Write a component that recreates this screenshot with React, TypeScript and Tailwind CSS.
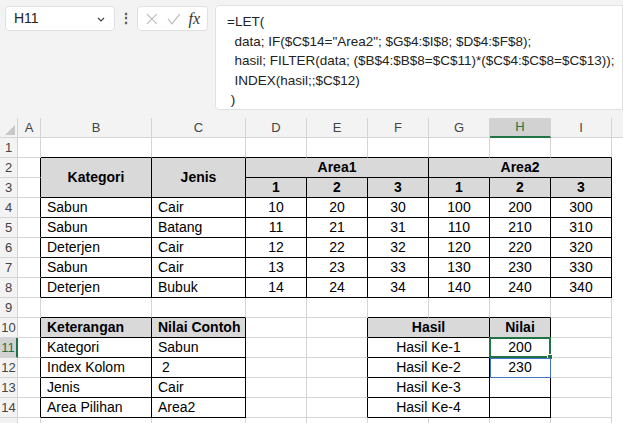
import React from 'react';

const COLS = [18, 23, 111, 94, 61, 61, 61, 61, 61, 61, 11];
const LETTERS = ['A', 'B', 'C', 'D', 'E', 'F', 'G', 'H', 'I'];
const GRID = '#d4d4d4';

type Cell = { r: number; c: number; rs?: number; cs?: number; t?: string; bold?: boolean; gray?: boolean; align?: 'l' | 'c' };

// c is 1-based: 1 = A ... 9 = I
const cells: Cell[] = [
  { r: 2, c: 2, rs: 2, t: 'Kategori', bold: true, gray: true, align: 'c' },
  { r: 2, c: 3, rs: 2, t: 'Jenis', bold: true, gray: true, align: 'c' },
  { r: 2, c: 4, cs: 3, t: 'Area1', bold: true, gray: true, align: 'c' },
  { r: 2, c: 7, cs: 3, t: 'Area2', bold: true, gray: true, align: 'c' },
  ...[4, 5, 6, 7, 8, 9].map((c, i) => ({ r: 3, c, t: String((i % 3) + 1), bold: true, gray: true, align: 'c' as const })),
];
const data = [
  ['Sabun', 'Cair', 10, 20, 30, 100, 200, 300],
  ['Sabun', 'Batang', 11, 21, 31, 110, 210, 310],
  ['Deterjen', 'Cair', 12, 22, 32, 120, 220, 320],
  ['Sabun', 'Cair', 13, 23, 33, 130, 230, 330],
  ['Deterjen', 'Bubuk', 14, 24, 34, 140, 240, 340],
];
data.forEach((row, i) => row.forEach((v, j) => cells.push({ r: 4 + i, c: 2 + j, t: String(v), align: j < 2 ? 'l' : 'c' })));
cells.push({ r: 10, c: 2, t: 'Keterangan', bold: true, gray: true }, { r: 10, c: 3, t: 'Nilai Contoh', bold: true, gray: true });
[['Kategori', 'Sabun'], ['Index Kolom', ' 2'], ['Jenis', 'Cair'], ['Area Pilihan', 'Area2']].forEach((p, i) => {
  cells.push({ r: 11 + i, c: 2, t: p[0] }, { r: 11 + i, c: 3, t: p[1] });
});
cells.push({ r: 10, c: 6, cs: 2, t: 'Hasil', bold: true, gray: true, align: 'c' }, { r: 10, c: 8, t: 'Nilai', bold: true, gray: true, align: 'c' });
['200', '230', '', ''].forEach((v, i) => {
  cells.push({ r: 11 + i, c: 6, cs: 2, t: 'Hasil Ke-' + (i + 1), align: 'c' }, { r: 11 + i, c: 8, t: v, align: 'c' });
});

const inTable = (r: number, c: number) =>
  (r >= 2 && r <= 8 && c >= 2 && c <= 9) || (r >= 10 && r <= 14 && ((c >= 2 && c <= 3) || (c >= 6 && c <= 8)));

export default function App() {
  const covered = new Set<string>();
  cells.forEach(x => { for (let a = 0; a < (x.rs || 1); a++) for (let b = 0; b < (x.cs || 1); b++) covered.add(`${x.r + a}-${x.c + b}`); });
  const items: React.ReactNode[] = [];
  for (let r = 1; r <= 15; r++) {
    for (let c = 1; c <= 9; c++) {
      if (covered.has(`${r}-${c}`)) continue;
      const br = inTable(r, c) || inTable(r, c + 1) ? '#000' : GRID;
      const bb = inTable(r, c) || inTable(r + 1, c) ? '#000' : GRID;
      items.push(<div key={`${r}-${c}`} style={{ gridRow: r + 1, gridColumn: c + 1, borderRight: `1px solid ${br}`, borderBottom: `1px solid ${bb}` }} />);
    }
  }
  cells.forEach(x => {
    const sel = x.r === 11 && x.c === 8;
    const blue = x.r === 12 && x.c === 8;
    items.push(
      <div key={`c${x.r}-${x.c}`}
        className={`relative flex items-center px-1.5 text-[14px] text-black whitespace-pre ${x.gray ? 'bg-[#d9d9d9]' : 'bg-white'} ${x.bold ? 'font-bold' : ''} ${x.align === 'c' ? 'justify-center' : ''}`}
        style={{ gridRow: `${x.r + 1} / span ${x.rs || 1}`, gridColumn: `${x.c + 1} / span ${x.cs || 1}`, borderRight: '1px solid #000', borderBottom: '1px solid #000' }}>
        {x.t}
        {sel && <div className="absolute -left-px -top-px -right-px -bottom-px border-2 border-[#217346]"><div className="absolute -right-[4px] -bottom-[4px] w-[6px] h-[6px] bg-[#217346] border border-white" /></div>}
        {blue && <div className="absolute left-0 top-0 -right-px -bottom-px border border-[#4472c4]" />}
      </div>
    );
  });

  return (
    <div className="w-[623px] h-[423px] overflow-hidden bg-white text-[#222]" style={{ fontFamily: '"Liberation Sans", Arial, sans-serif' }}>
      <div className="h-[118px] bg-[#f3f3f3] flex items-start pl-[5px] pt-[5px]">
        <div className="w-[110px] h-[25px] mt-[1px] bg-white rounded border border-[#e0e0e0] flex items-center justify-between px-2 text-[14px]">
          <span>H11</span>
          <svg width="10" height="10" viewBox="0 0 10 10"><path d="M2 4l3 3 3-3" stroke="#444" fill="none" strokeWidth="1.2" /></svg>
        </div>
        <div className="w-[22px] h-[27px] flex items-center justify-center text-[14px] text-[#555] font-bold">⋮</div>
        <div className="w-[71px] h-[25px] mt-[1px] bg-white rounded border border-[#e0e0e0] flex items-center gap-[8px] px-[7px]">
          <svg width="14" height="14" viewBox="0 0 14 14"><path d="M2 2l10 10M12 2L2 12" stroke="#bbb" strokeWidth="1.2" /></svg>
          <svg width="14" height="14" viewBox="0 0 14 14"><path d="M1 7l4 5 8-10" stroke="#bbb" fill="none" strokeWidth="1.2" /></svg>
          <span className="italic text-[16px] text-[#333]" style={{ fontFamily: '"Liberation Serif", serif' }}>fx</span>
        </div>
        <div className="flex-1 ml-[7px] h-[105px] bg-white rounded-l border border-[#e0e0e0] pl-[11px] pt-[6px] text-[13.5px] leading-[19.5px] whitespace-pre">
          {'=LET(\n  data; IF($C$14="Area2"; $G$4:$I$8; $D$4:$F$8);\n  hasil; FILTER(data; ($B$4:$B$8=$C$11)*($C$4:$C$8=$C$13));\n  INDEX(hasil;;$C$12)\n )'}
        </div>
      </div>
      <div className="grid" style={{ gridTemplateColumns: COLS.map(w => w + 'px').join(' '), gridTemplateRows: '20px ' + Array(15).fill('20px').join(' ') }}>
        <div className="bg-[#f3f3f3] border-r border-b border-[#d4d4d4] relative">
          <svg className="absolute right-[2px] bottom-[2px]" width="10" height="10"><path d="M10 0V10H0Z" fill="#c8c8c8" /></svg>
        </div>
        {LETTERS.map((l, i) => (
          <div key={l} style={{ gridRow: 1, gridColumn: i + 2 }}
            className={`flex items-center justify-center text-[13px] border-r border-[#d4d4d4] ${l === 'H' ? 'bg-[#d2d2d2] text-[#217346] border-b-2 border-b-[#217346]' : 'bg-[#f3f3f3] text-[#444] border-b border-b-[#d4d4d4]'}`}>{l}</div>
        ))}
        <div style={{ gridRow: 1, gridColumn: 11 }} className="bg-[#f3f3f3] border-b border-[#d4d4d4]" />
        {Array.from({ length: 15 }, (_, i) => (
          <div key={'r' + i} style={{ gridRow: i + 2, gridColumn: 1 }}
            className={`flex items-center justify-center text-[13px] border-b border-[#d4d4d4] ${i + 1 === 11 ? 'bg-[#d2d2d2] text-[#217346] border-r-2 border-r-[#217346]' : 'bg-[#f3f3f3] text-[#444] border-r border-r-[#d4d4d4]'}`}>{i < 14 ? i + 1 : ''}</div>
        ))}
        {items}
      </div>
    </div>
  );
}
